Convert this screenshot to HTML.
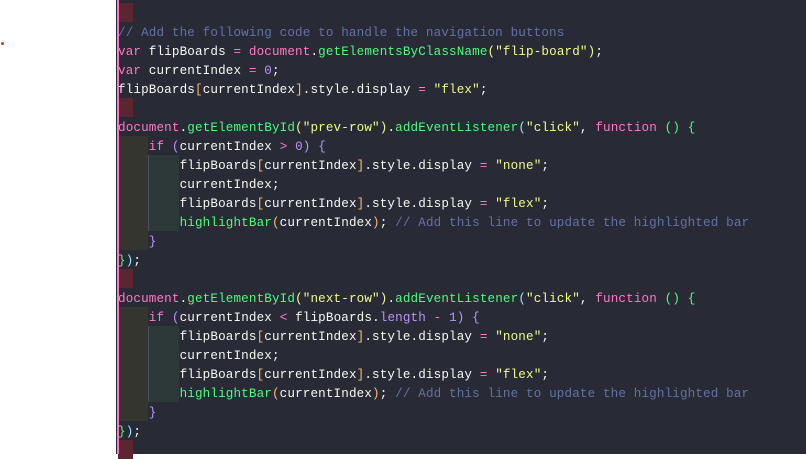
<!DOCTYPE html>
<html><head><style>
html,body{margin:0;padding:0;width:806px;height:454px;overflow:hidden;background:#fff;}
#ed{position:absolute;left:116px;top:0;width:690px;height:454px;background:#282a36;}
#bar{position:absolute;left:117px;top:0;width:1.5px;height:454px;background:#ff79c6;}
.dot{position:absolute;left:1px;top:42px;width:3px;height:3px;border-radius:2px;background:#f22;}
.mk{position:absolute;left:118px;width:15px;height:19px;background:#5a2730;}
.g1{position:absolute;left:118px;width:30px;background:#34352f;}
.g2{position:absolute;left:148px;width:31px;background:#2d3838;border-left:1px solid #4a4f57;box-sizing:border-box;}
.code{position:absolute;left:118px;top:5px;font-family:"Liberation Mono",monospace;font-size:12.6px;letter-spacing:0.14px;line-height:19px;color:#f8f8f2;white-space:pre;}
.c{color:#6272a4}.k{color:#ff79c6}.f{color:#50fa7b}.s{color:#f1fa8c}.p{color:#bd93f9}.o{color:#ffb86c}.b{color:#8be9fd}.y{color:#f1fa8c}
</style></head><body>
<div class="dot"></div>
<div id="ed"></div>
<div class="mk" style="top:3px"></div>
<div class="mk" style="top:98px"></div>
<div class="mk" style="top:269px"></div>
<div class="mk" style="top:440px"></div>
<div class="g1" style="top:136px;height:114px"></div>
<div class="g2" style="top:155px;height:76px"></div>
<div class="g1" style="top:307px;height:114px"></div>
<div class="g2" style="top:326px;height:76px"></div>
<div id="bar"></div>
<div class="code">
<span class="c">// Add the following code to handle the navigation buttons</span>
<span class="k">var</span> flipBoards <span class="k">=</span> <span class="k">document</span>.<span class="f">getElementsByClassName</span><span class="y">(</span><span class="s">"flip-board"</span><span class="y">)</span>;
<span class="k">var</span> currentIndex <span class="k">=</span> <span class="p">0</span>;
flipBoards<span class="o">[</span>currentIndex<span class="o">]</span>.style.display <span class="k">=</span> <span class="s">"flex"</span>;

<span class="k">document</span>.<span class="f">getElementById</span><span class="y">(</span><span class="s">"prev-row"</span><span class="y">)</span>.<span class="f">addEventListener</span><span class="b">(</span><span class="s">"click"</span>, <span class="k">function</span> <span class="f">()</span> <span class="f">{</span>
    <span class="k">if</span> <span class="p">(</span>currentIndex <span class="k">&gt;</span> <span class="p">0</span><span class="p">)</span> <span class="p">{</span>
        flipBoards<span class="o">[</span>currentIndex<span class="o">]</span>.style.display <span class="k">=</span> <span class="s">"none"</span>;
        currentIndex;
        flipBoards<span class="o">[</span>currentIndex<span class="o">]</span>.style.display <span class="k">=</span> <span class="s">"flex"</span>;
        <span class="f">highlightBar</span><span class="o">(</span>currentIndex<span class="o">)</span>; <span class="c">// Add this line to update the highlighted bar</span>
    <span class="p">}</span>
<span class="f">}</span><span class="b">)</span>;

<span class="k">document</span>.<span class="f">getElementById</span><span class="y">(</span><span class="s">"next-row"</span><span class="y">)</span>.<span class="f">addEventListener</span><span class="b">(</span><span class="s">"click"</span>, <span class="k">function</span> <span class="f">()</span> <span class="f">{</span>
    <span class="k">if</span> <span class="p">(</span>currentIndex <span class="k">&lt;</span> flipBoards.<span class="p">length</span> <span class="k">-</span> <span class="p">1</span><span class="p">)</span> <span class="p">{</span>
        flipBoards<span class="o">[</span>currentIndex<span class="o">]</span>.style.display <span class="k">=</span> <span class="s">"none"</span>;
        currentIndex;
        flipBoards<span class="o">[</span>currentIndex<span class="o">]</span>.style.display <span class="k">=</span> <span class="s">"flex"</span>;
        <span class="f">highlightBar</span><span class="o">(</span>currentIndex<span class="o">)</span>; <span class="c">// Add this line to update the highlighted bar</span>
    <span class="p">}</span>
<span class="f">}</span><span class="b">)</span>;</div>
</body></html>
